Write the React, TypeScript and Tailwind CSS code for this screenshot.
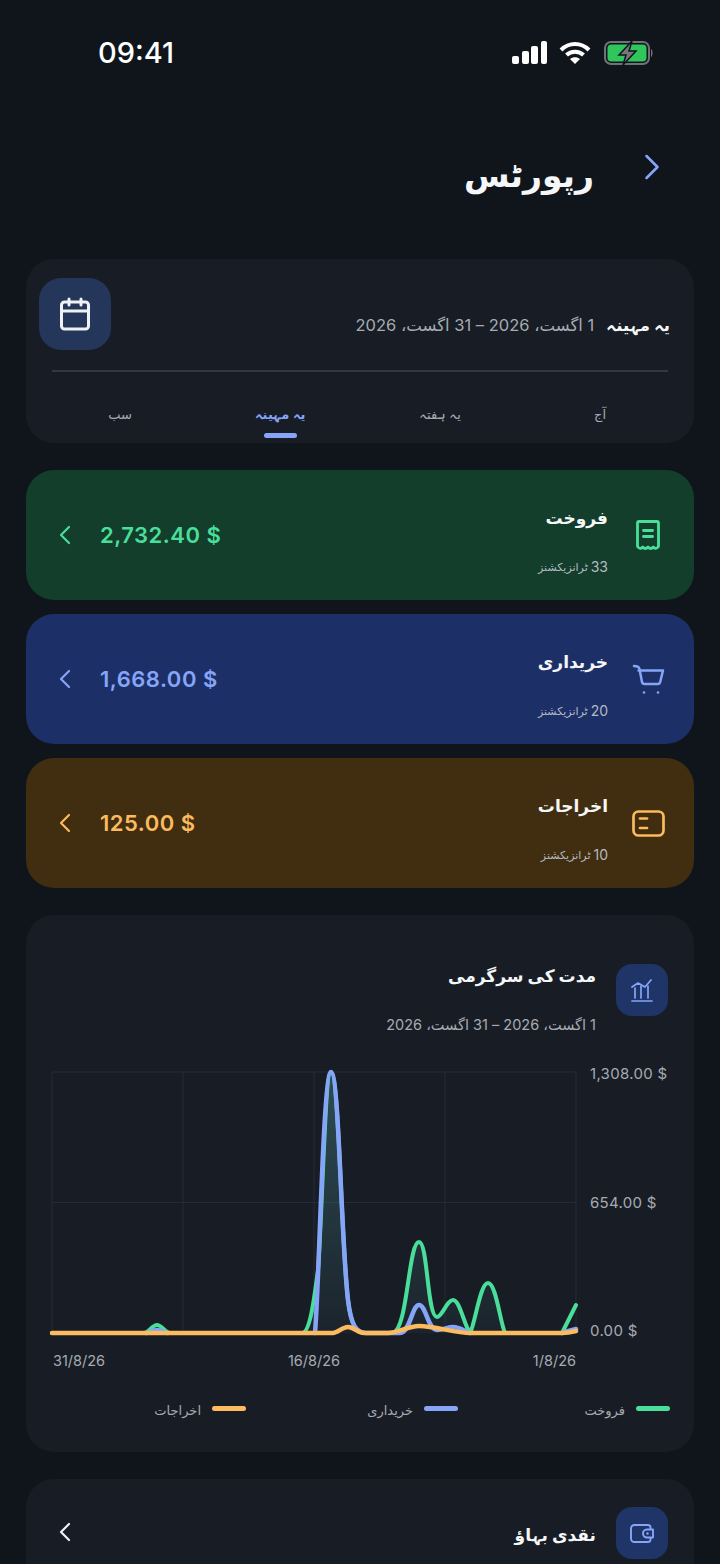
import { Calendar, ChevronLeft, ChevronRight } from "lucide-react";
import type { ReactNode } from "react";

const GREEN = "#4ade9b";
const BLUE = "#86a5f8";
const ORANGE = "#fbbb5e";

const RANGE = "1 اگست، 2026 – 31 اگست، 2026";

function StatusBar() {
  return (
    <div dir="ltr" className="flex h-[105px] items-center justify-between pl-[98px] pr-[66px]">
      <span className="text-[29px] font-medium leading-none text-white">09:41</span>
      <div className="flex items-center">
        <svg width="36" height="23" viewBox="0 0 36 23" fill="#fff" className="mr-[11px]">
          <rect x="0" y="15" width="7" height="8" rx="2" />
          <rect x="10" y="10" width="7" height="13" rx="2" />
          <rect x="19" y="5" width="7" height="18" rx="2" />
          <rect x="29" y="0" width="6" height="23" rx="2" />
        </svg>
        <svg width="32" height="24" viewBox="0 0 32 24" fill="none" stroke="#fff" strokeWidth="4" className="mr-[13px]">
          <path d="M2 9 C 10 1, 22 1, 30 9" />
          <path d="M7.5 14 C 12 9.5, 20 9.5, 24.5 14" />
          <path d="M16 23 L11 18 C 14 15.5, 18 15.5, 21 18 Z" fill="#fff" stroke="none" />
        </svg>
        <svg width="50" height="24" viewBox="0 0 50 24" fill="none">
          <rect x="1" y="1" width="44" height="22" rx="6" stroke="#6f7378" strokeWidth="2" />
          <rect x="3.5" y="3.5" width="39" height="17" rx="4" fill="#2fc65b" />
          <path d="M47 8 C 49 9, 49 15, 47 16 Z" fill="#6f7378" />
          <path d="M28 0 L15 14 H22 L19 24 L32 10 H25 Z" fill="#74787d" stroke="#10151c" strokeWidth="1.5" />
        </svg>
      </div>
    </div>
  );
}

function IconTile({ className, children }: { className: string; children: ReactNode }) {
  return <div className={`flex shrink-0 items-center justify-center ${className}`}>{children}</div>;
}

function ReceiptIcon() {
  return (
    <svg width="24" height="30" viewBox="0 0 24 30" fill="none" stroke={GREEN} strokeWidth="2.8" strokeLinejoin="round" strokeLinecap="round">
      <path d="M1.5 3 C 1.5 2, 2 1.5, 3 1.5 H21 C 22 1.5, 22.5 2, 22.5 3 V26.5 C 20.5 29, 19 29, 17.25 27 C 15.5 29, 13.75 29, 12 27 C 10.25 29, 8.5 29, 6.75 27 C 5 29, 3.5 29, 1.5 26.5 Z" />
      <path d="M7.5 10.5 H16.5" />
      <path d="M7.5 16.5 H16.5" />
    </svg>
  );
}

function CartIcon() {
  return (
    <svg width="33" height="31" viewBox="0 0 33 31" fill="none" stroke={BLUE} strokeWidth="2.5" strokeLinejoin="round" strokeLinecap="round">
      <path d="M2 2 C 5 2, 7 2.5, 7.5 5 L10 18 C 10.3 19.5, 11 20, 12.5 20 H26 C 27.2 20, 27.8 19.5, 28.2 18 L31 6.5 H6.5" />
      <circle cx="12" cy="28.5" r="1.3" fill={BLUE} stroke="none" />
      <circle cx="26" cy="28.5" r="1.3" fill={BLUE} stroke="none" />
    </svg>
  );
}

function ExpenseIcon() {
  return (
    <svg width="33" height="27" viewBox="0 0 33 27" fill="none" stroke={ORANGE} strokeWidth="2.7" strokeLinecap="round">
      <rect x="1.5" y="1.5" width="30" height="24" rx="5" />
      <path d="M8 8.5 H15" />
      <path d="M8 18 H15" />
    </svg>
  );
}

function ActivityIcon() {
  return (
    <svg width="22" height="23" viewBox="0 0 22 23" fill="none" stroke={BLUE} strokeWidth="1.7" strokeLinecap="round" strokeLinejoin="round">
      <path d="M1 22 H21" />
      <path d="M1 8 L7 4 L14 8 L20 1" />
      <path d="M4 19 V9" />
      <path d="M10 19 V7" />
      <path d="M17 19 V7" />
    </svg>
  );
}

function WalletIcon() {
  return (
    <svg width="24" height="19" viewBox="0 0 24 19" fill="none" stroke={BLUE} strokeWidth="1.9" strokeLinejoin="round">
      <path d="M4.5 1 H18 C 19.5 1, 20.5 2, 20.5 3.5 V15.5 C 20.5 17, 19.5 18, 18 18 H4.5 C 2.5 18, 1 16.5, 1 14.5 V4.5 C 1 2.5, 2.5 1, 4.5 1 Z" />
      <path d="M23 5.5 H17 C 14.5 5.5, 13 7.5, 13 9.5 C 13 11.5, 14.5 13.5, 17 13.5 H23 Z" fill="#1f3568" />
      <circle cx="17.5" cy="9.5" r="1.2" fill={BLUE} stroke="none" />
    </svg>
  );
}

type Stat = {
  title: string;
  count: string;
  amount: string;
  bg: string;
  text: string;
  icon: ReactNode;
};

const stats: Stat[] = [
  {
    title: "فروخت",
    count: "33",
    amount: "2,732.40 $",
    bg: "bg-[#133e2c]",
    text: "text-[#4ade9b]",
    icon: <ReceiptIcon />,
  },
  {
    title: "خریداری",
    count: "20",
    amount: "1,668.00 $",
    bg: "bg-[#1c3067]",
    text: "text-[#86a5f8]",
    icon: <CartIcon />,
  },
  {
    title: "اخراجات",
    count: "10",
    amount: "125.00 $",
    bg: "bg-[#412d0f]",
    text: "text-[#fbbb5e]",
    icon: <ExpenseIcon />,
  },
];

function StatCard({ stat }: { stat: Stat }) {
  return (
    <div className={`flex h-[130px] items-center rounded-[28px] pl-[23px] ${stat.bg}`}>
      <div className="flex w-[86px] shrink-0 justify-center pr-[6px]">{stat.icon}</div>
      <div className="flex flex-col gap-[25px] pt-[8px]">
        <span className="text-[17px] font-bold leading-[30px] text-[#f4f6f8]">{stat.title}</span>
        <span className="flex items-center gap-[3px] leading-[18px] text-[#b4bac2]">
          <span className="text-[14px]">{stat.count}</span>
          <span className="text-[11px]">ٹرانزیکشنز</span>
        </span>
      </div>
      <div className={`mr-auto flex items-center gap-[19px] ${stat.text}`} dir="ltr">
        <ChevronLeft size={32} strokeWidth={1.6} />
        <span className="text-[22px] font-semibold tracking-[0.5px]">{stat.amount}</span>
      </div>
    </div>
  );
}

function PeriodCard() {
  const tabs = ["آج", "یہ ہفتہ", "یہ مہینہ", "سب"];
  return (
    <div className="mx-[26px] h-[184px] rounded-[28px] bg-[#181d25]">
      <div className="flex h-[111px] items-center justify-between pb-[2px] pl-[13px] pr-[24px]">
        <div className="mt-[23px] flex items-center gap-[12px]">
          <span className="text-[16.5px] font-bold text-[#f4f6f8]">یہ مہینہ</span>
          <span className="text-[16.5px] text-[#a6abb3]">{RANGE}</span>
        </div>
        <IconTile className="h-[72px] w-[72px] rounded-[22px] bg-[#243659]">
          <Calendar size={36} strokeWidth={2} color="#eef1f6" />
        </IconTile>
      </div>
      <div className="mx-[26px] h-[2px] bg-[#33383f]" />
      <div className="grid grid-cols-4 px-[14px]">
        {tabs.map((tab, i) => (
          <div key={tab} className="relative flex h-[68px] items-center justify-center pt-[18px]">
            <span className={i === 2 ? "text-[13px] font-semibold text-[#86a5f8]" : "text-[13px] text-[#a6abb3]"}>{tab}</span>
            {i === 2 && <span className="absolute bottom-[2px] h-[5px] w-[33px] rounded-full bg-[#86a5f8]" />}
          </div>
        ))}
      </div>
    </div>
  );
}

// paths use page coordinates, the viewBox below lines them up with the card
const greenPath =
  "M52 1333 H144 C 149 1333, 152 1325, 157 1325 C 162 1325, 165 1333, 170 1333 H302 C 310 1333, 314 1300, 318 1270 C 322 1220, 325 1072, 331 1072 C 339 1072, 341 1240, 348 1300 C 351 1325, 356 1333, 366 1333 H392 C 408 1333, 408 1242, 419 1242 C 428 1242, 427 1317, 437 1317 C 442 1317, 447 1300, 453 1300 C 460 1300, 464 1325, 470 1333 C 475 1325, 480 1283, 488 1283 C 496 1283, 500 1322, 505 1333 H562 L576 1305";

const bluePath =
  "M146 1333 C 150 1333, 152 1330, 157 1330 C 162 1330, 164 1333, 168 1333 M315 1333 C 319 1290, 323 1072, 331 1072 C 339 1072, 341 1240, 348 1300 C 351 1325, 356 1333, 366 1333 H400 C 410 1333, 412 1305, 419 1305 C 426 1305, 428 1330, 437 1330 C 443 1330, 448 1327, 453 1327 C 460 1327, 464 1331, 470 1333 M562 1333 C 568 1331, 572 1330, 576 1329";

const orangePath =
  "M52 1333 H333 C 338 1333, 342 1327, 348 1327 C 354 1327, 358 1333, 364 1333 H388 C 398 1333, 408 1326, 419 1326 C 435 1326, 455 1333, 470 1333 H562 C 568 1333, 572 1332, 576 1331";

const fillPath =
  "M302 1333 C 310 1333, 314 1300, 318 1270 C 322 1220, 325 1072, 331 1072 C 339 1072, 341 1240, 348 1300 C 351 1325, 356 1333, 366 1333 Z M392 1333 C 408 1333, 408 1242, 419 1242 C 428 1242, 427 1317, 437 1317 C 442 1317, 447 1300, 453 1300 C 460 1300, 464 1325, 470 1333 C 475 1325, 480 1283, 488 1283 C 496 1283, 500 1322, 505 1333 Z";

function ActivityChart() {
  return (
    <svg width="524" height="261" viewBox="52 1072 524 261" className="shrink-0 overflow-visible" fill="none">
      <defs>
        <linearGradient id="area" x1="0" y1="1072" x2="0" y2="1333" gradientUnits="userSpaceOnUse">
          <stop offset="0" stopColor="#4a8d96" stopOpacity="0.42" />
          <stop offset="1" stopColor="#4a8d96" stopOpacity="0.06" />
        </linearGradient>
      </defs>
      <g stroke="#262b33" strokeWidth="1">
        <path d="M52 1072 V1333 M183 1072 V1333 M314 1072 V1333 M445 1072 V1333 M576 1072 V1333" />
        <path d="M52 1072 H576 M52 1202.5 H576" />
      </g>
      <path d={fillPath} fill="url(#area)" />
      <path d={greenPath} stroke={GREEN} strokeWidth="4" strokeLinecap="round" strokeLinejoin="round" />
      <path d={bluePath} stroke={BLUE} strokeWidth="4.5" strokeLinecap="round" strokeLinejoin="round" />
      <path d={orangePath} stroke={ORANGE} strokeWidth="4.5" strokeLinecap="round" strokeLinejoin="round" />
    </svg>
  );
}

function ActivityCard() {
  const legend = [
    { label: "فروخت", color: "bg-[#4ade9b]" },
    { label: "خریداری", color: "bg-[#86a5f8]" },
    { label: "اخراجات", color: "bg-[#fbbb5e]" },
  ];
  return (
    <div className="mx-[26px] mt-[27px] h-[537px] rounded-[28px] bg-[#181d25] pt-[49px]">
      <div className="flex items-start gap-[20px] pr-[26px]">
        <IconTile className="h-[52px] w-[52px] rounded-[16px] bg-[#1f3568]">
          <ActivityIcon />
        </IconTile>
        <div className="flex flex-col">
          <span className="text-[17px] font-bold leading-[24px] text-[#f4f6f8]">مدت کی سرگرمی</span>
          <span className="mt-[27px] text-[14.5px] leading-[20px] text-[#a6abb3]">{RANGE}</span>
        </div>
      </div>

      <div className="mt-[37px] flex items-start pl-[26px]">
        <div dir="ltr" className="-mt-[7px] flex h-[275px] w-[118px] shrink-0 flex-col justify-between pl-[14px] text-[15px] leading-[18px] tracking-[0.3px] text-[#a6abb3]">
          <span>1,308.00 $</span>
          <span>654.00 $</span>
          <span>0.00 $</span>
        </div>
        <ActivityChart />
      </div>

      <div dir="ltr" className="mr-[118px] mt-[12px] flex w-[523px] justify-between text-[14.5px] leading-[18px] text-[#a6abb3]">
        <span>31/8/26</span>
        <span className="mr-[10px]">16/8/26</span>
        <span>1/8/26</span>
      </div>

      <div className="mr-[24px] mt-[28px] grid w-[636px] grid-cols-3">
        {legend.map((item) => (
          <div key={item.label} className="flex h-[20px] items-center gap-[11px]">
            <span className={`h-[5px] w-[34px] rounded-full ${item.color}`} />
            <span className="mt-[6px] text-[13px] text-[#a6abb3]">{item.label}</span>
          </div>
        ))}
      </div>
    </div>
  );
}

function CashFlowCard() {
  return (
    <div className="mx-[26px] mt-[27px] flex h-[120px] items-start rounded-[28px] bg-[#181d25] pl-[23px] pr-[26px] pt-[28px]">
      <IconTile className="h-[52px] w-[52px] rounded-[16px] bg-[#1f3568]">
        <WalletIcon />
      </IconTile>
      <span className="mr-[20px] text-[17px] font-bold leading-[56px] text-[#f4f6f8]">نقدی بہاؤ</span>
      <ChevronLeft size={32} strokeWidth={1.6} color="#eef1f6" className="mr-auto mt-[9px]" />
    </div>
  );
}

export default function App() {
  return (
    <div dir="rtl" className="h-[1564px] w-[720px] overflow-hidden bg-[#10151c] font-['Inter','DejaVu_Sans',sans-serif]">
      <StatusBar />
      <div className="flex h-[154px] items-start gap-[36px] pr-[46px] pt-[40px]">
        <ChevronRight size={44} strokeWidth={1.4} color={BLUE} />
        <h1 className="text-[33px] font-semibold leading-[60px] text-[#f4f6f8]">رپورٹس</h1>
      </div>
      <PeriodCard />
      <div className="mx-[26px] mt-[27px] flex flex-col gap-[14px]">
        {stats.map((s) => (
          <StatCard key={s.title} stat={s} />
        ))}
      </div>
      <ActivityCard />
      <CashFlowCard />
    </div>
  );
}
